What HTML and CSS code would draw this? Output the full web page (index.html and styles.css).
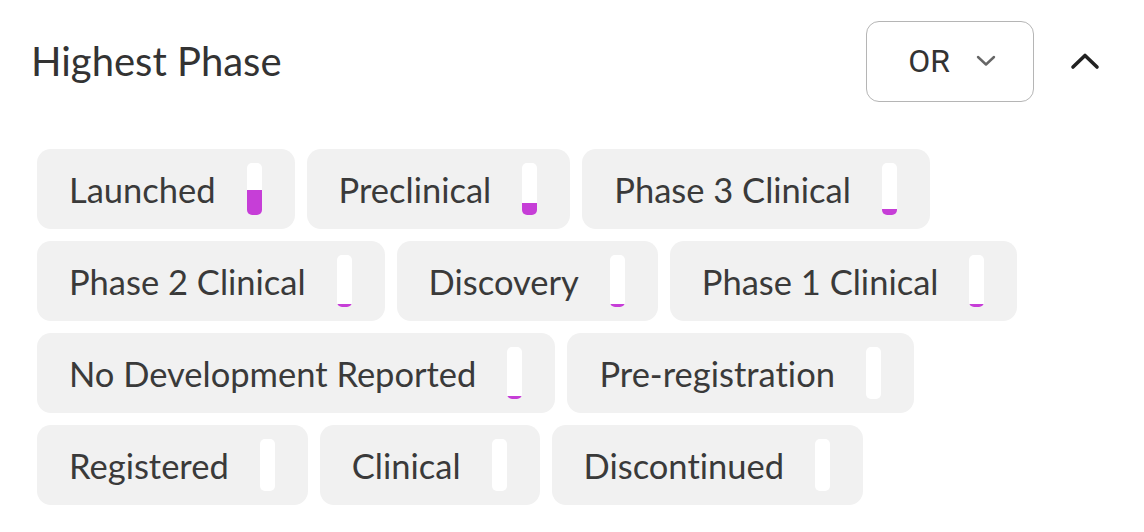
FILE: index.html
```html
<!DOCTYPE html>
<html lang="en">
<head>
    <meta charset="UTF-8">
    <meta name="viewport" content="width=device-width, initial-scale=1.0">
    <title>Highest Phase</title>
    <link rel="stylesheet" href="styles.css">
</head>
<body>
    <div class="panel">
        <div class="header">
            <h2 class="title">Highest Phase</h2>
            <button class="op">
                OR
                <svg class="op-arrow" width="20" height="12" viewBox="0 0 20 12"><path d="M2 2 L10 9.5 L18 2" fill="none" stroke="#666" stroke-width="2.4" stroke-linecap="round" stroke-linejoin="round"/></svg>
            </button>
            <svg class="collapse" width="30" height="18" viewBox="0 0 30 18"><path d="M3 15 L15 3.5 L27 15" fill="none" stroke="#222" stroke-width="3.6" stroke-linecap="round" stroke-linejoin="round"/></svg>
        </div>

        <div class="chips">
            <div class="chip"><span>Launched</span><span class="bar"><i style="height: 48%"></i></span></div>
            <div class="chip"><span>Preclinical</span><span class="bar"><i style="height: 23%"></i></span></div>
            <div class="chip"><span>Phase 3 Clinical</span><span class="bar"><i style="height: 11%"></i></span></div>
            <div class="chip"><span>Phase 2 Clinical</span><span class="bar"><i style="height: 6%"></i></span></div>
            <div class="chip"><span>Discovery</span><span class="bar"><i style="height: 6%"></i></span></div>
            <div class="chip"><span>Phase 1 Clinical</span><span class="bar"><i style="height: 6%"></i></span></div>
            <div class="chip"><span>No Development Reported</span><span class="bar"><i style="height: 5%"></i></span></div>
            <div class="chip"><span>Pre-registration</span><span class="bar"><i style="height: 0%"></i></span></div>
            <div class="chip"><span>Registered</span><span class="bar"><i style="height: 0%"></i></span></div>
            <div class="chip"><span>Clinical</span><span class="bar"><i style="height: 0%"></i></span></div>
            <div class="chip"><span>Discontinued</span><span class="bar"><i style="height: 0%"></i></span></div>
        </div>
    </div>
</body>
</html>
```

FILE: styles.css
```css
body {
    margin: 0;
    padding: 0;
    background: #fff;
    font-family: Lato, "Noto Sans", sans-serif;
    font-variant-ligatures: none;
}

.panel {
    padding: 21px 44px 0 31px;
}

.header {
    display: flex;
    align-items: center;
    height: 80px;
}
.title {
    flex: 1;
    margin: 0;
    font-size: 40px;
    font-weight: 400;
    color: #333;
}
.op {
    width: 168px;
    height: 81px;
    box-sizing: border-box;
    border: 1.5px solid #b5b5b5;
    border-radius: 13px;
    background: #fff;
    display: flex;
    align-items: center;
    justify-content: center;
    gap: 26px;
    font-family: Roboto, sans-serif;
    font-size: 32px;
    color: #333;
    padding: 0 0 0 4px;
}
.collapse {
    margin-left: 36px;
}

.chips {
    display: flex;
    flex-wrap: wrap;
    gap: 12px;
    margin: 48px 0 0 6px;
    width: 1000px;
}
.chip {
    display: flex;
    align-items: center;
    gap: 31px;
    height: 80px;
    box-sizing: border-box;
    padding: 0 33px 0 32px;
    background: #f1f1f1;
    border-radius: 14px;
    font-size: 34.5px;
    color: #3a3a3a;
}
.bar {
    width: 15px;
    height: 52px;
    background: #fff;
    border-radius: 5px;
    overflow: hidden;
    display: flex;
    align-items: flex-end;
}
.bar i {
    display: block;
    width: 100%;
    background: #c63ed7;
}
```
